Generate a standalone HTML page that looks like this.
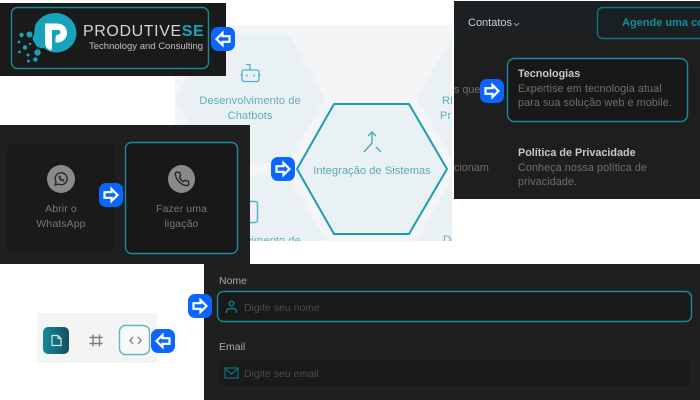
<!DOCTYPE html>
<html lang="pt">
<head>
<meta charset="utf-8">
<style>
html,body{margin:0;padding:0;background:#fff;}
body{position:relative;width:700px;height:400px;overflow:hidden;font-family:"Liberation Sans",sans-serif;}
#w{position:absolute;left:0;top:0;width:700px;height:400px;filter:blur(.35px);}
.a{position:absolute;box-sizing:border-box;}
.t{position:absolute;white-space:nowrap;line-height:1;}
.c{text-align:center;}
.badge{position:absolute;width:24px;height:24px;border-radius:7px;background:#0a66ff;}
.badge svg{display:block;width:24px;height:24px;}
</style>
</head>
<body>
<div id="w">

<!-- Hexagon panel -->
<div class="a" style="left:175px;top:25px;width:277px;height:216px;background:#f4f5f6;overflow:hidden;">
<svg width="277" height="216" viewBox="175 25 277 216" style="position:absolute;left:0;top:0;">
  <polygon points="175,98 212,33 288,33 325,98 288,163 212,163" fill="#e9f1f4"/>
  <polygon points="417,98 454,33 530,33 567,98 530,163 454,163" fill="#e9f1f4"/>
  <polygon points="175,240 212,175 288,175 325,240 288,305 212,305" fill="#e9f1f4"/>
  <polygon points="417,240 454,175 530,175 567,240 530,305 454,305" fill="#e9f1f4"/>
  <polygon points="297,169 334,104 409,104 447,169 409,234 334,234" fill="#e9f1f4" stroke="#1f9db0" stroke-width="2"/>
  <!-- robot -->
  <g fill="none" stroke="#4fb0c0" stroke-width="1.300">
    <rect x="242" y="70" width="17" height="11.500" rx="2"/>
    <path d="M250 70V64.500H246M242 75H240.500M259 75H260.500"/>
    <path d="M247 74.500V76.500M254 74.500V76.500"/>
  </g>
  <!-- merge icon -->
  <g fill="none" stroke="#4fa6b5" stroke-width="1.400">
    <path d="M372 132V143L364 152M376 147L381 152"/>
    <path d="M368 136L372 132L376 136"/>
  </g>
  <!-- partially hidden icon -->
  <rect x="240" y="201.500" width="17.500" height="21" rx="2" fill="none" stroke="#4fb0c0" stroke-width="1.400"/>
</svg>
<div class="t c" style="left:0;width:150px;top:71px;font-size:11.200px;color:#63aebd;">Desenvolvimento de</div>
<div class="t c" style="left:0;width:150px;top:86px;font-size:11.200px;color:#63aebd;">Chatbots</div>
<div class="t" style="left:267px;top:71px;font-size:11.200px;color:#63aebd;">RP</div>
<div class="t" style="left:265px;top:86px;font-size:11.200px;color:#63aebd;">Pr</div>
<div class="t c" style="left:122px;width:150px;top:141px;font-size:11.200px;color:#5fa9b8;">Integração de Sistemas</div>
<div class="t c" style="left:0;width:150px;top:211px;font-size:11.200px;color:#63aebd;">Desenvolvimento de</div>
<div class="t" style="left:268px;top:210px;font-size:11.200px;color:#63aebd;">De</div>
</div>

<!-- Logo panel -->
<div class="a" style="left:0;top:3px;width:226px;height:73px;background:#1a1a1a;"></div>
<svg class="a" style="left:0;top:0;" width="226" height="76"><rect x="11.500" y="7.500" width="197" height="61" rx="6" fill="none" stroke="#188a9d" stroke-width="1.400"/></svg>
<svg class="a" style="left:15px;top:10px;" width="70" height="56" viewBox="15 10 70 56">
  <path d="M56 13C67 13 76.500 22 76.500 33C76.500 44 67 52.500 56 52.500C51 52.500 47 50.500 44 48C40 49 35 46 35 43C32 40 32 37 34 35C35 30 34 24 38 21C42 16 48 13 56 13Z" fill="#18a3ba"/>
  <g fill="#18a3ba">
    <circle cx="29.500" cy="34.500" r="3"/><circle cx="21.500" cy="35" r="2.200"/><circle cx="19" cy="42" r="1.400"/>
    <circle cx="25" cy="47.500" r="2.200"/><circle cx="19.500" cy="52" r="1.400"/><circle cx="28" cy="55" r="1.500"/>
    <circle cx="37.500" cy="52.500" r="3.200"/><circle cx="35.500" cy="59.500" r="2.200"/><circle cx="28.500" cy="61" r="1.500"/>
    <circle cx="30" cy="44" r="1.200"/>
  </g>
  <path d="M45 23.500H57C63.500 23.500 67 28 67 33C67 38.500 62.500 42.500 57 42.500H55.500V38C55.500 36 56.500 35 58.500 34.500C60 34 60.500 33.500 60.500 32.500C60.500 31 59.500 30 58 30H52V47.500C52 50 51.500 50.500 50 50C47 49 45 46 45 43Z" fill="#fff"/>
</svg>
<div class="t" style="left:83px;top:24px;font-size:16px;letter-spacing:.6px;color:#d4d4d4;">PRODUTIVE<span style="color:#18a3ba;font-weight:bold;">SE</span></div>
<div class="t" style="left:89px;top:42px;font-size:9.500px;color:#c0c0c0;">Technology and Consulting</div>

<!-- Call panel -->
<div class="a" style="left:0;top:125px;width:250px;height:139px;background:#1f1f1f;"></div>
<div class="a" style="left:7px;top:144px;width:108px;height:108px;background:#1a1a1a;border-radius:5px;"></div>
<svg class="a" style="left:120px;top:137px;" width="124" height="122"><rect x="5.500" y="5.500" width="112" height="111" rx="6" fill="#181818" stroke="#188a9d" stroke-width="1.400"/></svg>
<div class="a" style="left:47px;top:165px;width:28px;height:28px;border-radius:50%;background:#8a8a8a;"></div>
<svg class="a" style="left:53px;top:171px;" width="16" height="16" viewBox="0 0 24 24" fill="none" stroke="#262626" stroke-width="2">
  <path d="M3 21L4.600 16.500A9 9 0 1 1 8 19.600Z"/>
  <path d="M9 8.500C8.500 11.500 11.500 15 15.500 15.500L16.500 13.500L14.500 12.500L13.500 13.300C12.300 12.800 11.300 11.800 10.800 10.600L11.500 9.500L10.500 7.500Z" stroke-width="1.300"/>
</svg>
<div class="a" style="left:168px;top:165px;width:27px;height:28px;border-radius:50%;background:#8a8a8a;"></div>
<svg class="a" style="left:174px;top:171px;" width="16" height="16" viewBox="0 0 24 24" fill="none" stroke="#262626" stroke-width="2.100" stroke-linejoin="round">
  <path d="M22 16.900V20A2 2 0 0 1 19.800 22A19.800 19.800 0 0 1 2 4.200A2 2 0 0 1 4 2H7.100A2 2 0 0 1 9.100 3.700C9.200 4.700 9.500 5.600 9.800 6.500A2 2 0 0 1 9.300 8.600L8.100 9.900A16 16 0 0 0 14.100 15.900L15.400 14.700A2 2 0 0 1 17.500 14.200C18.400 14.500 19.300 14.800 20.300 14.900A2 2 0 0 1 22 16.900Z"/>
</svg>
<div class="t c" style="left:7px;width:108px;top:204px;font-size:10.500px;letter-spacing:.1px;color:#787878;">Abrir o</div>
<div class="t c" style="left:7px;width:108px;top:219px;font-size:10.500px;letter-spacing:.1px;color:#787878;">WhatsApp</div>
<div class="t c" style="left:125px;width:113px;top:204px;font-size:10.500px;letter-spacing:.1px;color:#787878;">Fazer uma</div>
<div class="t c" style="left:125px;width:113px;top:219px;font-size:10.500px;letter-spacing:.1px;color:#787878;">ligação</div>

<!-- Menu panel -->
<div class="a" style="left:454px;top:1px;width:246px;height:198px;background:#1e1e1e;overflow:hidden;">
  <div class="a" style="left:0;top:0;width:246px;height:40px;background:#1c2022;"></div>
  <div class="t" style="left:14px;top:17px;font-size:11px;color:#cfcfcf;">Contatos</div>
  <svg class="a" style="left:59px;top:21px;" width="7" height="5" viewBox="0 0 7 5" fill="none" stroke="#9a9a9a" stroke-width="1"><path d="M1 1L3.500 3.500L6 1"/></svg>
  <svg class="a" style="left:140px;top:3px;" width="130" height="38"><rect x="3.500" y="3.500" width="125" height="31" rx="5" fill="#1a2022" stroke="#12707f" stroke-width="1.400"/></svg>
  <div class="t" style="left:168px;top:17px;font-size:11px;font-weight:bold;color:#178b9e;">Agende uma con</div>
  <div class="t" style="left:-6px;top:84px;font-size:10.800px;color:#6e6e6e;">es que</div>
  <div class="t" style="left:-6px;top:162px;font-size:10.800px;color:#6e6e6e;">ecionam</div>
  <svg class="a" style="left:50px;top:54px;" width="188" height="70"><rect x="3.500" y="3.500" width="180" height="63" rx="7" fill="#181818" stroke="#188a9d" stroke-width="1.400"/></svg>
  <div class="t" style="left:64px;top:68px;font-size:10.800px;font-weight:bold;color:#c8c8c8;">Tecnologias</div>
  <div class="t" style="left:64px;top:83px;font-size:10.800px;letter-spacing:.07px;color:#6e6e6e;">Expertise em tecnologia atual</div>
  <div class="t" style="left:64px;top:97px;font-size:10.800px;letter-spacing:.07px;color:#6e6e6e;">para sua solução web e mobile.</div>
  <div class="t" style="left:64px;top:147px;font-size:10.800px;font-weight:bold;color:#c8c8c8;">Política de Privacidade</div>
  <div class="t" style="left:64px;top:162px;font-size:10.800px;letter-spacing:.07px;color:#6e6e6e;">Conheça nossa política de</div>
  <div class="t" style="left:64px;top:176px;font-size:10.800px;letter-spacing:.07px;color:#6e6e6e;">privacidade.</div>
</div>

<!-- Toolbar -->
<div class="a" style="left:37px;top:313px;width:120px;height:50px;background:#f3f4f4;"></div>
<div class="a" style="left:43px;top:327px;width:26px;height:27px;border-radius:5px;background:linear-gradient(90deg,#17899c,#14505f);"></div>
<svg class="a" style="left:50px;top:334px;" width="13" height="13" viewBox="0 0 13 13" fill="none" stroke="#d6e6ea" stroke-width="1.200"><path d="M2 1.500H8L11 4.500V11.500H2Z"/><path d="M8 1.500V4.500H11"/></svg>
<svg class="a" style="left:89px;top:334px;" width="14" height="13" viewBox="0 0 14 13" fill="none" stroke="#7d7d7d" stroke-width="1.400"><path d="M4 0.500V12.500M10.500 0.500V12.500M0.500 3.500H13.500M0.500 9.500H13.500"/></svg>
<svg class="a" style="left:116px;top:322px;" width="37" height="36"><rect x="3.500" y="3.500" width="30" height="29" rx="6" fill="#f7f8f8" stroke="#62b6c7" stroke-width="1.400"/></svg>
<svg class="a" style="left:129px;top:336px;" width="13" height="9" viewBox="0 0 13 9" fill="none" stroke="#8a8a8a" stroke-width="1.500"><path d="M4 1L1 4.500L4 8M9 1L12 4.500L9 8"/></svg>

<!-- Form panel -->
<div class="a" style="left:204px;top:264px;width:496px;height:136px;background:#1f1f1f;"></div>
<div class="t" style="left:219px;top:276px;font-size:10.500px;color:#a8a8a8;">Nome</div>
<svg class="a" style="left:214px;top:288px;" width="481" height="37"><rect x="3.500" y="3.500" width="474" height="30" rx="6" fill="#191919" stroke="#188a9d" stroke-width="1.400"/></svg>
<svg class="a" style="left:225px;top:300px;" width="13" height="14" viewBox="0 0 13 14" fill="none" stroke="#157a8b" stroke-width="1.400"><circle cx="6.500" cy="3.500" r="2.300"/><path d="M1.500 13V11.500C1.500 9.500 3 8.500 5 8.500H8C10 8.500 11.500 9.500 11.500 11.500V13"/></svg>
<div class="t" style="left:244px;top:303px;font-size:10.500px;color:#4c4c4c;">Digite seu nome</div>
<div class="t" style="left:219px;top:342px;font-size:10.500px;color:#a8a8a8;">Email</div>
<div class="a" style="left:219px;top:359px;width:471px;height:27px;background:#1a1a1a;border-radius:4px;"></div>
<svg class="a" style="left:224px;top:367px;" width="15" height="12" viewBox="0 0 15 12" fill="none" stroke="#12697a" stroke-width="1.300"><rect x="1" y="1" width="13" height="10"/><path d="M1 1.500L7.500 7L14 1.500"/></svg>
<div class="t" style="left:244px;top:369px;font-size:10.500px;color:#4c4c4c;">Digite seu email</div>

</div>

<!-- Badges -->
<div class="badge" style="left:211px;top:27px;"><svg viewBox="0 0 24 24"><path d="M5.500 12L11.500 6V9.200H18.500V14.800H11.500V18Z" fill="#0a66ff" stroke="#fff" stroke-width="2.200"/></svg></div>
<div class="badge" style="left:99px;top:183px;"><svg viewBox="0 0 24 24"><path d="M18.500 12L12.500 6V9.200H5.500V14.800H12.500V18Z" fill="#0a66ff" stroke="#fff" stroke-width="2.200"/></svg></div>
<div class="badge" style="left:271px;top:157px;"><svg viewBox="0 0 24 24"><path d="M18.500 12L12.500 6V9.200H5.500V14.800H12.500V18Z" fill="#0a66ff" stroke="#fff" stroke-width="2.200"/></svg></div>
<div class="badge" style="left:480px;top:79px;"><svg viewBox="0 0 24 24"><path d="M18.500 12L12.500 6V9.200H5.500V14.800H12.500V18Z" fill="#0a66ff" stroke="#fff" stroke-width="2.200"/></svg></div>
<div class="badge" style="left:188px;top:294px;"><svg viewBox="0 0 24 24"><path d="M18.500 12L12.500 6V9.200H5.500V14.800H12.500V18Z" fill="#0a66ff" stroke="#fff" stroke-width="2.200"/></svg></div>
<div class="badge" style="left:151px;top:329px;"><svg viewBox="0 0 24 24"><path d="M5.500 12L11.500 6V9.200H18.500V14.800H11.500V18Z" fill="#0a66ff" stroke="#fff" stroke-width="2.200"/></svg></div>

</body>
</html>
